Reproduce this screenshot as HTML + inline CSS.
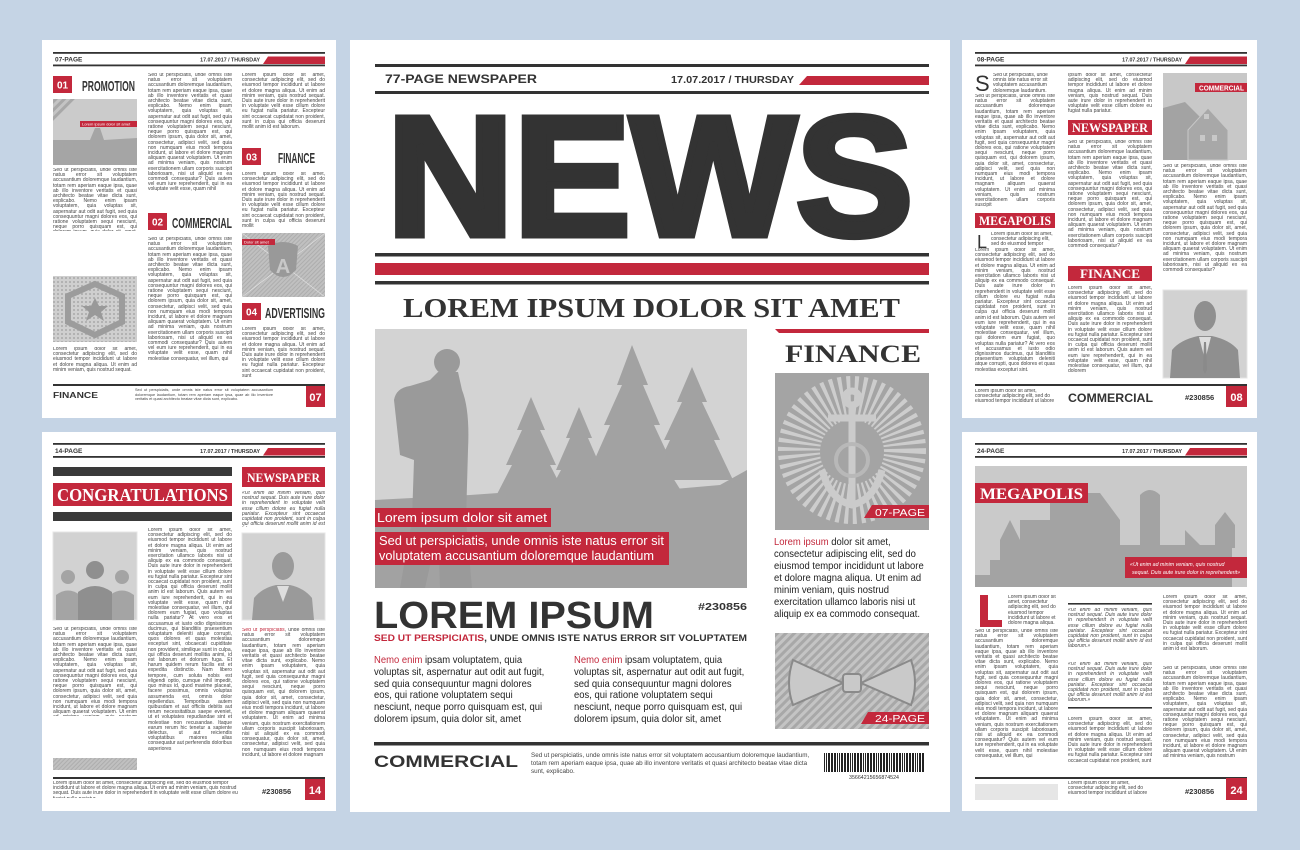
<!DOCTYPE html>
<html><head><meta charset="utf-8">
<style>
html,body{margin:0;padding:0}
body{width:1300px;height:850px;position:relative;overflow:hidden;background:#c5d4e5;font-family:"Liberation Sans",sans-serif}
svg{position:absolute;left:0;top:0}
.s{position:absolute;font:5px/5.2px "Liberation Sans",sans-serif;color:#444;text-align:justify;overflow:hidden}
.i{font-style:italic}
.m{position:absolute;font:10.5px/11.8px "Liberation Sans",sans-serif;color:#222;overflow:hidden;transform:scaleX(0.9);transform-origin:0 0}
.r{color:#c3283c}
</style></head><body>
<svg width="1300" height="850" viewBox="0 0 1300 850" font-family="Liberation Sans, sans-serif">
<defs>
<pattern id="dots" width="4" height="4" patternUnits="userSpaceOnUse"><rect width="4" height="4" fill="#cfcfcf"/><circle cx="2" cy="2" r="1" fill="#a8a8a8"/></pattern>
<pattern id="diag" width="6" height="6" patternUnits="userSpaceOnUse" patternTransform="rotate(45)"><rect width="6" height="6" fill="#c4c4c4"/><rect width="3" height="6" fill="#a8a8a8"/></pattern>
<pattern id="thin" width="3" height="3" patternUnits="userSpaceOnUse" patternTransform="rotate(45)"><rect width="3" height="3" fill="#c0c0c0"/><rect width="1" height="3" fill="#adadad"/></pattern>
<pattern id="bar" width="13" height="20" patternUnits="userSpaceOnUse"><rect x="0" width="1" height="20" fill="#222"/><rect x="2" width="2" height="20" fill="#222"/><rect x="5" width="1" height="20" fill="#222"/><rect x="7" width="1" height="20" fill="#222"/><rect x="9" width="2" height="20" fill="#222"/><rect x="12" width="1" height="20" fill="#222"/></pattern>
</defs>
<rect width="1300" height="850" fill="#c5d4e5"/>
<rect x="42" y="40" width="294" height="378" fill="#fff"/>
<rect x="42" y="432" width="294" height="379" fill="#fff"/>
<rect x="350" y="40" width="600" height="772" fill="#fff"/>
<rect x="962" y="40" width="295" height="378" fill="#fff"/>
<rect x="962" y="432" width="295" height="379" fill="#fff"/>

<!-- ===== TOP LEFT ===== -->
<rect x="53" y="52" width="272" height="1.8" fill="#333"/><rect x="53" y="64.5" width="272" height="1.8" fill="#333"/>
<text x="55" y="61.5" font-size="6.5" font-weight="bold" fill="#333">07-PAGE</text>
<text x="260" y="61.5" font-size="5.3" font-weight="bold" fill="#333" text-anchor="end">17.07.2017 / THURSDAY</text>
<polygon points="263,64 268,56.5 325,56.5 325,64" fill="#c3283c"/>
<rect x="53" y="76" width="19" height="17" fill="#c3283c"/><text x="62.5" y="88.5" font-size="10" font-weight="bold" fill="#fff" text-anchor="middle">01</text>
<text x="82" y="91" font-size="15" font-weight="bold" fill="#333" textLength="53" lengthAdjust="spacingAndGlyphs">PROMOTION</text>
<rect x="53" y="99" width="84" height="66" fill="#cbcbcb"/>
<polygon points="53,99 75,99 53,121" fill="url(#diag)"/>
<polygon points="53,165 53,140 90,140 95,128 100,128 104,140 137,138 137,165" fill="#a5a5a5"/>
<rect x="80" y="121" width="57" height="6" fill="#c3283c"/><text x="82" y="125.5" font-size="4" fill="#fff">Lorem ipsum dolor sit amet</text>
<rect x="53" y="276" width="84" height="66" fill="url(#dots)"/>
<polygon points="95,284 122,296 122,322 95,335 68,322 68,296" fill="none" stroke="#9c9c9c" stroke-width="6"/>
<polygon points="95,298 99,306 108,306 101,312 104,321 95,315 86,321 89,312 82,306 91,306" fill="#999"/>
<rect x="148" y="213" width="19" height="17" fill="#c3283c"/><text x="157.5" y="225.5" font-size="10" font-weight="bold" fill="#fff" text-anchor="middle">02</text>
<text x="172" y="228" font-size="15" font-weight="bold" fill="#333" textLength="60" lengthAdjust="spacingAndGlyphs">COMMERCIAL</text>
<rect x="242" y="148" width="19" height="17" fill="#c3283c"/><text x="251.5" y="160.5" font-size="10" font-weight="bold" fill="#fff" text-anchor="middle">03</text>
<text x="278" y="163" font-size="15" font-weight="bold" fill="#333" textLength="37" lengthAdjust="spacingAndGlyphs">FINANCE</text>
<rect x="242" y="233" width="83" height="64" fill="url(#thin)"/>
<line x1="242" y1="233" x2="325" y2="297" stroke="#e0e0e0" stroke-width="0.7"/><line x1="325" y1="233" x2="242" y2="297" stroke="#e0e0e0" stroke-width="0.7"/>
<path d="M268,246 Q283,238 298,246 L296,270 Q283,284 270,270 Z" fill="#999"/>
<text x="283" y="273" font-size="20" font-weight="bold" fill="#c8c8c8" text-anchor="middle">A</text>
<rect x="242" y="239" width="33" height="6" fill="#c3283c"/><text x="244" y="243.5" font-size="4" fill="#fff">Dolor sit amet</text>
<rect x="242" y="303" width="19" height="17" fill="#c3283c"/><text x="251.5" y="315.5" font-size="10" font-weight="bold" fill="#fff" text-anchor="middle">04</text>
<text x="265" y="318" font-size="15" font-weight="bold" fill="#333" textLength="60" lengthAdjust="spacingAndGlyphs">ADVERTISING</text>
<rect x="53" y="384" width="272" height="2" fill="#333"/>
<text x="53" y="398" font-size="8" font-weight="bold" fill="#333" textLength="45" lengthAdjust="spacingAndGlyphs">FINANCE</text>
<rect x="306" y="386" width="19" height="21" fill="#c3283c"/><text x="315.5" y="401" font-size="11" font-weight="bold" fill="#fff" text-anchor="middle">07</text>

<!-- ===== BOTTOM LEFT ===== -->
<rect x="53" y="443" width="272" height="1.8" fill="#333"/><rect x="53" y="456" width="272" height="1.8" fill="#333"/>
<text x="55" y="453" font-size="6.5" font-weight="bold" fill="#333">14-PAGE</text>
<text x="260" y="453" font-size="5.3" font-weight="bold" fill="#333" text-anchor="end">17.07.2017 / THURSDAY</text>
<polygon points="263,455.5 268,448 325,448 325,455.5" fill="#c3283c"/>
<rect x="53" y="467" width="179" height="9" fill="#3a3a3a"/>
<rect x="53" y="483" width="179" height="23" fill="#c3283c"/>
<text x="57" y="501" font-family="Liberation Serif, serif" font-size="18" font-weight="bold" fill="#fff" textLength="171" lengthAdjust="spacingAndGlyphs">CONGRATULATIONS</text>
<rect x="53" y="512" width="179" height="9" fill="#3a3a3a"/>
<rect x="242" y="467" width="83" height="20" fill="#c3283c"/>
<text x="247" y="482" font-family="Liberation Serif, serif" font-size="13" font-weight="bold" fill="#fff" textLength="73" lengthAdjust="spacingAndGlyphs">NEWSPAPER</text>
<rect x="53" y="532" width="84" height="88" fill="#d2d2d2" stroke="#e4e4e4"/>
<circle cx="68" cy="577" r="7" fill="#a4a4a4"/><path d="M56,620 L56,595 Q68,586 80,595 L80,620Z" fill="#a4a4a4"/>
<circle cx="122" cy="577" r="7" fill="#a4a4a4"/><path d="M110,620 L110,595 Q122,586 134,595 L134,620Z" fill="#a4a4a4"/>
<circle cx="95" cy="570" r="9" fill="#8f8f8f"/><path d="M78,620 L78,592 Q95,580 112,592 L112,620Z" fill="#8f8f8f"/>
<rect x="53" y="758" width="84" height="12" fill="url(#thin)"/>
<rect x="242" y="533" width="83" height="87" fill="#d2d2d2" stroke="#e4e4e4"/>
<ellipse cx="283" cy="566" rx="11" ry="14" fill="#9a9a9a"/><path d="M252,620 L254,598 Q262,588 276,585 L290,585 Q304,588 312,598 L314,620Z" fill="#9a9a9a"/>
<path d="M277,586 L283,602 L289,586Z" fill="#dedede"/>
<rect x="53" y="777" width="272" height="2" fill="#333"/>
<text x="262" y="794" font-size="7.5" font-weight="bold" fill="#333">#230856</text>
<rect x="305" y="779" width="20" height="21" fill="#c3283c"/><text x="315" y="794" font-size="11" font-weight="bold" fill="#fff" text-anchor="middle">14</text>

<!-- ===== TOP RIGHT ===== -->
<rect x="975" y="52" width="272" height="1.8" fill="#333"/><rect x="975" y="64.5" width="272" height="1.8" fill="#333"/>
<text x="977" y="61.5" font-size="6.5" font-weight="bold" fill="#333">08-PAGE</text>
<text x="1182" y="61.5" font-size="5.3" font-weight="bold" fill="#333" text-anchor="end">17.07.2017 / THURSDAY</text>
<polygon points="1185,64 1190,56.5 1247,56.5 1247,64" fill="#c3283c"/>
<text x="975" y="91" font-size="22" fill="#333">S</text>
<rect x="975" y="213" width="80" height="15" fill="#c3283c"/>
<text x="979" y="225" font-family="Liberation Serif, serif" font-size="12.5" font-weight="bold" fill="#fff" textLength="72" lengthAdjust="spacingAndGlyphs">MEGAPOLIS</text>
<text x="977" y="248" font-size="18" fill="#333">L</text>
<rect x="1068" y="120" width="84" height="15" fill="#c3283c"/>
<text x="1072" y="132" font-family="Liberation Serif, serif" font-size="12.5" font-weight="bold" fill="#fff" textLength="76" lengthAdjust="spacingAndGlyphs">NEWSPAPER</text>
<rect x="1068" y="266" width="84" height="15" fill="#c3283c"/>
<text x="1080" y="278" font-family="Liberation Serif, serif" font-size="12.5" font-weight="bold" fill="#fff" textLength="60" lengthAdjust="spacingAndGlyphs">FINANCE</text>
<rect x="1163" y="73" width="84" height="87" fill="#c8c8c8"/>
<polygon points="1163,160 1163,108 1185,102 1205,122 1205,160" fill="#a3a3a3"/>
<polygon points="1188,160 1188,130 1208,108 1228,130 1228,160" fill="#a8a8a8" stroke="#c8c8c8"/>
<rect x="1200" y="135" width="5" height="6" fill="#c8c8c8"/><rect x="1212" y="135" width="5" height="6" fill="#c8c8c8"/><rect x="1204" y="114" width="5" height="5" fill="#c8c8c8"/>
<rect x="1195" y="83" width="52" height="9" fill="#c3283c"/><text x="1199" y="90.5" font-size="7" font-weight="bold" fill="#fff" textLength="45" lengthAdjust="spacingAndGlyphs">COMMERCIAL</text>
<rect x="1163" y="290" width="84" height="88" fill="#d2d2d2" stroke="#e4e4e4"/>
<ellipse cx="1205" cy="316" rx="11" ry="15" fill="#8f8f8f"/><path d="M1170,378 L1172,350 Q1180,340 1198,336 L1212,336 Q1230,340 1238,350 L1240,378Z" fill="#8f8f8f"/>
<path d="M1199,337 L1205,360 L1211,337Z" fill="#dedede"/><path d="M1204,342 L1206,342 L1207,370 L1205,374 L1203,370Z" fill="#8a8a8a"/>
<rect x="975" y="384" width="272" height="2" fill="#333"/>
<text x="1068" y="402" font-size="12" font-weight="bold" fill="#333" textLength="85" lengthAdjust="spacingAndGlyphs">COMMERCIAL</text>
<text x="1185" y="400" font-size="7.5" font-weight="bold" fill="#333">#230856</text>
<rect x="1226" y="386" width="21" height="21" fill="#c3283c"/><text x="1236.5" y="401" font-size="11" font-weight="bold" fill="#fff" text-anchor="middle">08</text>

<!-- ===== BOTTOM RIGHT ===== -->
<rect x="975" y="443" width="272" height="1.8" fill="#333"/><rect x="975" y="456" width="272" height="1.8" fill="#333"/>
<text x="977" y="453" font-size="6.5" font-weight="bold" fill="#333">24-PAGE</text>
<text x="1182" y="453" font-size="5.3" font-weight="bold" fill="#333" text-anchor="end">17.07.2017 / THURSDAY</text>
<polygon points="1185,455.5 1190,448 1247,448 1247,455.5" fill="#c3283c"/>
<rect x="975" y="466" width="272" height="121" fill="#cacaca"/>
<path d="M975,587 L975,575 L990,575 L990,560 L1000,560 L1000,540 L1010,520 L1020,540 L1020,520 L1050,520 L1050,493 L1100,493 L1120,520 L1120,545 L1140,545 L1140,495 Q1150,485 1160,495 L1160,545 L1185,545 L1185,530 L1200,545 L1215,545 L1215,525 L1225,512 L1235,525 L1235,548 L1232,548 L1232,587Z" fill="#a3a3a3"/>
<rect x="975" y="483" width="113" height="20" fill="#c3283c"/>
<text x="980" y="499" font-family="Liberation Serif, serif" font-size="16" font-weight="bold" fill="#fff" textLength="103" lengthAdjust="spacingAndGlyphs">MEGAPOLIS</text>
<rect x="1125" y="557" width="122" height="21" fill="#c3283c"/>
<text x="1130" y="566" font-size="5.3" font-style="italic" fill="#fff">«Ut enim ad minim veniam, quis nostrud</text>
<text x="1132" y="574" font-size="5.3" font-style="italic" fill="#fff">sequat. Duis aute irure dolor in reprehenderit»</text>
<path d="M980,595 L988,595 L988,620 L1002,620 L1002,627 L980,627Z" fill="#c3283c"/>
<rect x="1068" y="603" width="84" height="1.6" fill="#333"/>
<rect x="1068" y="707" width="84" height="1.6" fill="#333"/>
<rect x="975" y="777" width="272" height="2" fill="#333"/>
<rect x="975" y="784" width="83" height="16" fill="#e6e6e6"/>
<text x="1185" y="794" font-size="7.5" font-weight="bold" fill="#333">#230856</text>
<rect x="1226" y="778" width="21" height="22" fill="#c3283c"/><text x="1236.5" y="794" font-size="11" font-weight="bold" fill="#fff" text-anchor="middle">24</text>

<!-- ===== CENTER ===== -->
<rect x="375" y="64" width="554" height="3" fill="#333"/>
<text x="385" y="83" font-size="12" font-weight="bold" fill="#333" textLength="152" lengthAdjust="spacingAndGlyphs">77-PAGE NEWSPAPER</text>
<text x="794" y="83" font-size="10" font-weight="bold" fill="#333" text-anchor="end" textLength="123" lengthAdjust="spacingAndGlyphs">17.07.2017 / THURSDAY</text>
<polygon points="799,85 807,76 929,76 929,85" fill="#c3283c"/>
<rect x="375" y="91" width="554" height="3" fill="#333"/>
<text x="387" y="235" font-family="Liberation Sans, sans-serif" font-size="170" font-weight="bold" fill="#333" stroke="#333" stroke-width="7" stroke-linejoin="miter" textLength="526" lengthAdjust="spacingAndGlyphs">NEWS</text>
<rect x="375" y="253" width="554" height="3.5" fill="#333"/>
<rect x="375" y="263" width="554" height="12" fill="#c3283c"/>
<rect x="375" y="281" width="554" height="3.5" fill="#333"/>
<text x="403" y="317" font-family="Liberation Serif, serif" font-size="27" font-weight="bold" fill="#333" textLength="497" lengthAdjust="spacingAndGlyphs">LOREM IPSUM DOLOR SIT AMET</text>
<!-- photo -->
<rect x="375" y="329" width="372" height="259" fill="#d3d3d3"/>
<g fill="#a2a2a2">
<polygon points="531,397 545,430 540,430 556,465 550,465 568,500 494,500 512,465 506,465 522,430 517,430"/>
<polygon points="579,407 592,438 588,438 602,470 597,470 614,502 544,502 561,470 556,470 570,438 566,438"/>
<polygon points="632,345 648,385 643,385 660,425 654,425 675,470 668,470 690,505 574,505 596,470 590,470 610,425 604,425 622,385 617,385"/>
<polygon points="692,367 707,402 702,402 720,440 714,440 733,480 651,480 670,440 664,440 682,402 677,402"/>
<polygon points="375,588 375,500 470,495 540,490 640,492 720,485 747,470 747,588"/>
</g>
<g fill="#9a9a9a">
<circle cx="447" cy="362" r="13"/>
<path d="M438,372 L458,372 L462,390 Q470,410 468,450 L466,520 L472,588 L440,588 L438,530 L425,588 L400,588 L412,520 L414,460 L400,455 L394,400 Q396,388 410,386 L430,380Z"/>
</g>
<rect x="375" y="508" width="176" height="19" fill="#c3283c"/>
<text x="377" y="522" font-size="13" fill="#fff" textLength="170" lengthAdjust="spacingAndGlyphs">Lorem ipsum dolor sit amet</text>
<rect x="375" y="532" width="294" height="33" fill="#c3283c"/>
<text x="379" y="545" font-size="12.5" fill="#fff" textLength="285" lengthAdjust="spacingAndGlyphs">Sed ut perspiciatis, unde omnis iste natus error sit</text>
<text x="379" y="560" font-size="12.5" fill="#fff" textLength="275" lengthAdjust="spacingAndGlyphs">voluptatem accusantium doloremque laudantium</text>
<!-- right column -->
<polygon points="775,329 929,329 929,333 779,333" fill="#c3283c"/>
<text x="785" y="362" font-family="Liberation Serif, serif" font-size="25" font-weight="bold" fill="#333" textLength="136" lengthAdjust="spacingAndGlyphs">FINANCE</text>
<rect x="775" y="373" width="154" height="157" fill="#a4a4a4"/>
<circle cx="852" cy="450" r="52" fill="none" stroke="#cdcdcd" stroke-width="44" stroke-dasharray="3 3.5"/>
<circle cx="852" cy="452" r="32" fill="#a4a4a4"/>
<g fill="none" stroke="#cbcbcb" stroke-width="7">
<circle cx="852" cy="398" r="7"/>
<line x1="852" y1="405" x2="852" y2="505"/>
<line x1="828" y1="418" x2="876" y2="418"/>
<path d="M822,470 Q830,500 852,505 Q874,500 882,470"/>
</g>
<circle cx="852" cy="460" r="16" fill="none" stroke="#b8b8b8" stroke-width="4"/>
<polygon points="864,518 872,505 929,505 929,518" fill="#c3283c"/>
<text x="875" y="516" font-size="10.5" fill="#fff" textLength="50" lengthAdjust="spacingAndGlyphs">07-PAGE</text>
<rect x="775" y="633" width="154" height="96" fill="url(#diag)"/>
<path d="M793,660 L843,683 L793,705 Q785,683 793,660Z M911,660 L861,683 L911,705 Q919,683 911,660Z" fill="#c9c9c9" stroke="#8a8a8a" stroke-width="2"/>
<rect x="843" y="674" width="18" height="18" rx="3" fill="#c9c9c9" stroke="#8a8a8a" stroke-width="2"/>
<polygon points="861,724 868,712 929,712 929,724" fill="#c3283c"/>
<text x="875" y="722" font-size="10.5" fill="#fff" textLength="50" lengthAdjust="spacingAndGlyphs">24-PAGE</text>
<!-- big title -->
<text x="374" y="628" font-size="38" font-weight="bold" fill="#333" textLength="280" lengthAdjust="spacingAndGlyphs">LOREM IPSUM</text>
<text x="698" y="610" font-size="10" font-weight="bold" fill="#333" textLength="49" lengthAdjust="spacingAndGlyphs">#230856</text>
<text x="374" y="641" font-size="9.5" font-weight="bold" fill="#333" textLength="373" lengthAdjust="spacingAndGlyphs"><tspan fill="#c3283c">SED UT PERSPICIATIS</tspan>, UNDE OMNIS ISTE NATUS ERROR SIT VOLUPTATEM</text>
<rect x="374" y="742" width="555" height="3.5" fill="#333"/>
<text x="374" y="767" font-size="17" font-weight="bold" fill="#333" textLength="144" lengthAdjust="spacingAndGlyphs">COMMERCIAL</text>
<rect x="823" y="753" width="102" height="19" fill="url(#bar)"/>
<text x="874" y="779" font-size="5" fill="#333" text-anchor="middle" textLength="50" lengthAdjust="spacingAndGlyphs">35664215656874524</text>
</svg>

<!-- center paragraphs -->
<div class="m" style="left:774px;top:536px;width:172px;height:86px;line-height:12px">
<span class="r">Lorem ipsum</span> dolor sit amet, consectetur adipiscing elit, sed do eiusmod tempor incididunt ut labore et dolore magna aliqua. Ut enim ad minim veniam, quis nostrud exercitation ullamco laboris nisi ut aliquip ex ea commodo consequat.</div>
<div class="m" style="left:374px;top:655px;width:195px;height:72px"><span class="r">Nemo enim</span> ipsam voluptatem, quia voluptas sit, aspernatur aut odit aut fugit, sed quia consequuntur magni dolores eos, qui ratione voluptatem sequi nesciunt, neque porro quisquam est, qui dolorem ipsum, quia dolor sit, amet</div>
<div class="m" style="left:574px;top:655px;width:195px;height:72px"><span class="r">Nemo enim</span> ipsam voluptatem, quia voluptas sit, aspernatur aut odit aut fugit, sed quia consequuntur magni dolores eos, qui ratione voluptatem sequi nesciunt, neque porro quisquam est, qui dolorem ipsum, quia dolor sit, amet</div>
<div class="s" style="left:531px;top:752px;width:280px;height:26px;font-size:6.3px;line-height:8px;text-align:left">Sed ut perspiciatis, unde omnis iste natus error sit voluptatem accusantium doloremque laudantium, totam rem aperiam eaque ipsa, quae ab illo inventore veritatis et quasi architecto beatae vitae dicta sunt, explicabo.</div>

<!-- TOP LEFT paragraphs -->
<div class="s" style="left:53px;top:168px;width:84px;height:63px">Sed ut perspiciatis, unde omnis iste natus error sit voluptatem accusantium doloremque laudantium, totam rem aperiam eaque ipsa, quae ab illo inventore veritatis et quasi architecto beatae vitae dicta sunt, explicabo. Nemo enim ipsam voluptatem, quia voluptas sit, aspernatur aut odit aut fugit, sed quia consequuntur magni dolores eos, qui ratione voluptatem sequi nesciunt, neque porro quisquam est, qui dolorem ipsum, quia dolor sit, amet, consectetur, adipisci velit, sed quia non numquam eius modi tempora incidunt, ut labore et dolore magnam aliquam quaerat voluptatem.</div>
<div class="s" style="left:53px;top:347px;width:84px;height:31px">Lorem ipsum dolor sit amet, consectetur adipiscing elit, sed do eiusmod tempor incididunt ut labore et dolore magna aliqua. Ut enim ad minim veniam, quis nostrud sequat.</div>
<div class="s" style="left:148px;top:73px;width:84px;height:131px">Sed ut perspiciatis, unde omnis iste natus error sit voluptatem accusantium doloremque laudantium, totam rem aperiam eaque ipsa, quae ab illo inventore veritatis et quasi architecto beatae vitae dicta sunt, explicabo. Nemo enim ipsam voluptatem, quia voluptas sit, aspernatur aut odit aut fugit, sed quia consequuntur magni dolores eos, qui ratione voluptatem sequi nesciunt, neque porro quisquam est, qui dolorem ipsum, quia dolor sit, amet, consectetur, adipisci velit, sed quia non numquam eius modi tempora incidunt, ut labore et dolore magnam aliquam quaerat voluptatem. Ut enim ad minima veniam, quis nostrum exercitationem ullam corporis suscipit laboriosam, nisi ut aliquid ex ea commodi consequatur? Quis autem vel eum iure reprehenderit, qui in ea voluptate velit esse, quam nihil</div>
<div class="s" style="left:148px;top:237px;width:84px;height:141px">Sed ut perspiciatis, unde omnis iste natus error sit voluptatem accusantium doloremque laudantium, totam rem aperiam eaque ipsa, quae ab illo inventore veritatis et quasi architecto beatae vitae dicta sunt, explicabo. Nemo enim ipsam voluptatem, quia voluptas sit, aspernatur aut odit aut fugit, sed quia consequuntur magni dolores eos, qui ratione voluptatem sequi nesciunt, neque porro quisquam est, qui dolorem ipsum, quia dolor sit, amet, consectetur, adipisci velit, sed quia non numquam eius modi tempora incidunt, ut labore et dolore magnam aliquam quaerat voluptatem. Ut enim ad minima veniam, quis nostrum exercitationem ullam corporis suscipit laboriosam, nisi ut aliquid ex ea commodi consequatur? Quis autem vel eum iure reprehenderit, qui in ea voluptate velit esse, quam nihil molestiae consequatur, vel illum, qui</div>
<div class="s" style="left:242px;top:73px;width:83px;height:70px">Lorem ipsum dolor sit amet, consectetur adipiscing elit, sed do eiusmod tempor incididunt ut labore et dolore magna aliqua. Ut enim ad minim veniam, quis nostrud sequat. Duis aute irure dolor in reprehenderit in voluptate velit esse cillum dolore eu fugiat nulla pariatur. Excepteur sint occaecat cupidatat non proident, sunt in culpa qui officia deserunt mollit anim id est laborum.</div>
<div class="s" style="left:242px;top:172px;width:83px;height:56px">Lorem ipsum dolor sit amet, consectetur adipiscing elit, sed do eiusmod tempor incididunt ut labore et dolore magna aliqua. Ut enim ad minim veniam, quis nostrud sequat. Duis aute irure dolor in reprehenderit in voluptate velit esse cillum dolore eu fugiat nulla pariatur. Excepteur sint occaecat cupidatat non proident, sunt in culpa qui officia deserunt mollit</div>
<div class="s" style="left:242px;top:327px;width:83px;height:51px">Lorem ipsum dolor sit amet, consectetur adipiscing elit, sed do eiusmod tempor incididunt ut labore et dolore magna aliqua. Ut enim ad minim veniam, quis nostrud sequat. Duis aute irure dolor in reprehenderit in voluptate velit esse cillum dolore eu fugiat nulla pariatur. Excepteur sint occaecat cupidatat non proident, sunt</div>
<div class="s" style="left:135px;top:388px;width:138px;height:16px;font-size:3.8px;line-height:4.6px">Sed ut perspiciatis, unde omnis iste natus error sit voluptatem accusantium doloremque laudantium, totam rem aperiam eaque ipsa, quae ab illo inventore veritatis et quasi architecto beatae vitae dicta sunt, explicabo.</div>

<!-- BOTTOM LEFT paragraphs -->
<div class="s i" style="left:242px;top:491px;width:83px;height:36px">«Ut enim ad minim veniam, quis nostrud sequat. Duis aute irure dolor in reprehenderit in voluptate velit esse cillum dolore eu fugiat nulla pariatur. Excepteur sint occaecat cupidatat non proident, sunt in culpa qui officia deserunt mollit anim id est laborum.»</div>
<div class="s" style="left:53px;top:627px;width:84px;height:89px">Sed ut perspiciatis, unde omnis iste natus error sit voluptatem accusantium doloremque laudantium, totam rem aperiam eaque ipsa, quae ab illo inventore veritatis et quasi architecto beatae vitae dicta sunt, explicabo. Nemo enim ipsam voluptatem, quia voluptas sit, aspernatur aut odit aut fugit, sed quia consequuntur magni dolores eos, qui ratione voluptatem sequi nesciunt, neque porro quisquam est, qui dolorem ipsum, quia dolor sit, amet, consectetur, adipisci velit, sed quia non numquam eius modi tempora incidunt, ut labore et dolore magnam aliquam quaerat voluptatem. Ut enim ad minima veniam, quis nostrum exercitationem ullam corporis suscipit laboriosam, nisi ut aliquid ex ea commodi consequatur?</div>
<div class="s" style="left:148px;top:528px;width:84px;height:245px">Lorem ipsum dolor sit amet, consectetur adipiscing elit, sed do eiusmod tempor incididunt ut labore et dolore magna aliqua. Ut enim ad minim veniam, quis nostrud exercitation ullamco laboris nisi ut aliquip ex ea commodo consequat. Duis aute irure dolor in reprehenderit in voluptate velit esse cillum dolore eu fugiat nulla pariatur. Excepteur sint occaecat cupidatat non proident, sunt in culpa qui officia deserunt mollit anim id est laborum. Quis autem vel eum iure reprehenderit, qui in ea voluptate velit esse, quam nihil molestiae consequatur, vel illum, qui dolorem eum fugiat, quo voluptas nulla pariatur? At vero eos et accusamus et iusto odio dignissimos ducimus, qui blanditiis praesentium voluptatum deleniti atque corrupti, quos dolores et quas molestias excepturi sint, obcaecati cupiditate non provident, similique sunt in culpa, qui officia deserunt mollitia animi, id est laborum et dolorum fuga. Et harum quidem rerum facilis est et expedita distinctio. Nam libero tempore, cum soluta nobis est eligendi optio, cumque nihil impedit, quo minus id, quod maxime placeat, facere possimus, omnis voluptas assumenda est, omnis dolor repellendus. Temporibus autem quibusdam et aut officiis debitis aut rerum necessitatibus saepe eveniet, ut et voluptates repudiandae sint et molestiae non recusandae. Itaque earum rerum hic tenetur a sapiente delectus, ut aut reiciendis voluptatibus maiores alias consequatur aut perferendis doloribus asperiores</div>
<div class="s" style="left:242px;top:628px;width:83px;height:145px"><span class="r">Sed ut perspiciatis</span>, unde omnis iste natus error sit voluptatem accusantium doloremque laudantium, totam rem aperiam eaque ipsa, quae ab illo inventore veritatis et quasi architecto beatae vitae dicta sunt, explicabo. Nemo enim ipsam voluptatem, quia voluptas sit, aspernatur aut odit aut fugit, sed quia consequuntur magni dolores eos, qui ratione voluptatem sequi nesciunt, neque porro quisquam est, qui dolorem ipsum, quia dolor sit, amet, consectetur, adipisci velit, sed quia non numquam eius modi tempora incidunt, ut labore et dolore magnam aliquam quaerat voluptatem. Ut enim ad minima veniam, quis nostrum exercitationem ullam corporis suscipit laboriosam, nisi ut aliquid ex ea commodi consequatur, quis dolor sit, amet, consectetur, adipisci velit, sed quia non numquam eius modi tempora incidunt, ut labore et dolore magnam</div>
<div class="s" style="left:53px;top:781px;width:195px;height:17px;text-align:left">Lorem ipsum dolor sit amet, consectetur adipiscing elit, sed do eiusmod tempor incididunt ut labore et dolore magna aliqua. Ut enim ad minim veniam, quis nostrud sequat. Duis aute irure dolor in reprehenderit in voluptate velit esse cillum dolore eu fugiat nulla pariatur.</div>

<!-- TOP RIGHT paragraphs -->
<div class="s" style="left:993px;top:73px;width:62px;height:21px;text-align:left">Sed ut perspiciatis, unde omnis iste natus error sit voluptatem accusantium doloremque laudantium.</div>
<div class="s" style="left:975px;top:94px;width:80px;height:119px">Sed ut perspiciatis, unde omnis iste natus error sit voluptatem accusantium doloremque laudantium, totam rem aperiam eaque ipsa, quae ab illo inventore veritatis et quasi architecto beatae vitae dicta sunt, explicabo. Nemo enim ipsam voluptatem, quia voluptas sit, aspernatur aut odit aut fugit, sed quia consequuntur magni dolores eos, qui ratione voluptatem sequi nesciunt, neque porro quisquam est, qui dolorem ipsum, quia dolor sit, amet, consectetur, adipisci velit, sed quia non numquam eius modi tempora incidunt, ut labore et dolore magnam aliquam quaerat voluptatem. Ut enim ad minima veniam, quis nostrum exercitationem ullam corporis suscipit</div>
<div class="s" style="left:991px;top:232px;width:64px;height:16px;text-align:left">Lorem ipsum dolor sit amet, consectetur adipiscing elit, sed do eiusmod tempor</div>
<div class="s" style="left:975px;top:248px;width:80px;height:130px">Lorem ipsum dolor sit amet, consectetur adipiscing elit, sed do eiusmod tempor incididunt ut labore et dolore magna aliqua. Ut enim ad minim veniam, quis nostrud exercitation ullamco laboris nisi ut aliquip ex ea commodo consequat. Duis aute irure dolor in reprehenderit in voluptate velit esse cillum dolore eu fugiat nulla pariatur. Excepteur sint occaecat cupidatat non proident, sunt in culpa qui officia deserunt mollit anim id est laborum. Quis autem vel eum iure reprehenderit, qui in ea voluptate velit esse, quam nihil molestiae consequatur, vel illum, qui dolorem eum fugiat, quo voluptas nulla pariatur? At vero eos et accusamus et iusto odio dignissimos ducimus, qui blanditiis praesentium voluptatum deleniti atque corrupti, quos dolores et quas molestias excepturi sint.</div>
<div class="s" style="left:1068px;top:73px;width:84px;height:42px">Ipsum dolor sit amet, consectetur adipiscing elit, sed do eiusmod tempor incididunt ut labore et dolore magna aliqua. Ut enim ad minim veniam, quis nostrud sequat. Duis aute irure dolor in reprehenderit in voluptate velit esse cillum dolore eu fugiat nulla pariatur.</div>
<div class="s" style="left:1068px;top:140px;width:84px;height:122px">Sed ut perspiciatis, unde omnis iste natus error sit voluptatem accusantium doloremque laudantium, totam rem aperiam eaque ipsa, quae ab illo inventore veritatis et quasi architecto beatae vitae dicta sunt, explicabo. Nemo enim ipsam voluptatem, quia voluptas sit, aspernatur aut odit aut fugit, sed quia consequuntur magni dolores eos, qui ratione voluptatem sequi nesciunt, neque porro quisquam est, qui dolorem ipsum, quia dolor sit, amet, consectetur, adipisci velit, sed quia non numquam eius modi tempora incidunt, ut labore et dolore magnam aliquam quaerat voluptatem. Ut enim ad minima veniam, quis nostrum exercitationem ullam corporis suscipit laboriosam, nisi ut aliquid ex ea commodi consequatur?</div>
<div class="s" style="left:1068px;top:286px;width:84px;height:92px">Lorem ipsum dolor sit amet, consectetur adipiscing elit, sed do eiusmod tempor incididunt ut labore et dolore magna aliqua. Ut enim ad minim veniam, quis nostrud exercitation ullamco laboris nisi ut aliquip ex ea commodo consequat. Duis aute irure dolor in reprehenderit in voluptate velit esse cillum dolore eu fugiat nulla pariatur. Excepteur sint occaecat cupidatat non proident, sunt in culpa qui officia deserunt mollit anim id est laborum. Quis autem vel eum iure reprehenderit, qui in ea voluptate velit esse, quam nihil molestiae consequatur, vel illum, qui dolorem</div>
<div class="s" style="left:1163px;top:164px;width:84px;height:124px">Sed ut perspiciatis, unde omnis iste natus error sit voluptatem accusantium doloremque laudantium, totam rem aperiam eaque ipsa, quae ab illo inventore veritatis et quasi architecto beatae vitae dicta sunt, explicabo. Nemo enim ipsam voluptatem, quia voluptas sit, aspernatur aut odit aut fugit, sed quia consequuntur magni dolores eos, qui ratione voluptatem sequi nesciunt, neque porro quisquam est, qui dolorem ipsum, quia dolor sit, amet, consectetur, adipisci velit, sed quia non numquam eius modi tempora incidunt, ut labore et dolore magnam aliquam quaerat voluptatem. Ut enim ad minima veniam, quis nostrum exercitationem ullam corporis suscipit laboriosam, nisi ut aliquid ex ea commodi consequatur?</div>
<div class="s" style="left:975px;top:389px;width:82px;height:17px;text-align:left">Lorem ipsum dolor sit amet, consectetur adipiscing elit, sed do eiusmod tempor incididunt ut labore</div>

<!-- BOTTOM RIGHT paragraphs -->
<div class="s" style="left:1008px;top:595px;width:50px;height:32px;text-align:left">Lorem ipsum dolor sit amet, consectetur adipiscing elit, sed do eiusmod tempor incididunt ut labore et dolore magna aliqua.</div>
<div class="s" style="left:975px;top:629px;width:83px;height:144px">Sed ut perspiciatis, unde omnis iste natus error sit voluptatem accusantium doloremque laudantium, totam rem aperiam eaque ipsa, quae ab illo inventore veritatis et quasi architecto beatae vitae dicta sunt, explicabo. Nemo enim ipsam voluptatem, quia voluptas sit, aspernatur aut odit aut fugit, sed quia consequuntur magni dolores eos, qui ratione voluptatem sequi nesciunt, neque porro quisquam est, qui dolorem ipsum, quia dolor sit, amet, consectetur, adipisci velit, sed quia non numquam eius modi tempora incidunt, ut labore et dolore magnam aliquam quaerat voluptatem. Ut enim ad minima veniam, quis nostrum exercitationem ullam corporis suscipit laboriosam, nisi ut aliquid ex ea commodi consequatur? Quis autem vel eum iure reprehenderit, qui in ea voluptate velit esse, quam nihil molestiae consequatur, vel illum, qui</div>
<div class="s i" style="left:1068px;top:608px;width:84px;height:42px">«Ut enim ad minim veniam, quis nostrud sequat. Duis aute irure dolor in reprehenderit in voluptate velit esse cillum dolore eu fugiat nulla pariatur. Excepteur sint occaecat cupidatat non proident, sunt in culpa qui officia deserunt mollit anim id est laborum.»</div>
<div class="s i" style="left:1068px;top:662px;width:84px;height:42px">«Ut enim ad minim veniam, quis nostrud sequat. Duis aute irure dolor in reprehenderit in voluptate velit esse cillum dolore eu fugiat nulla pariatur. Excepteur sint occaecat cupidatat non proident, sunt in culpa qui officia deserunt mollit anim id est laborum.»</div>
<div class="s" style="left:1068px;top:717px;width:84px;height:56px">Lorem ipsum dolor sit amet, consectetur adipiscing elit, sed do eiusmod tempor incididunt ut labore et dolore magna aliqua. Ut enim ad minim veniam, quis nostrud sequat. Duis aute irure dolor in reprehenderit in voluptate velit esse cillum dolore eu fugiat nulla pariatur. Excepteur sint occaecat cupidatat non proident, sunt</div>
<div class="s" style="left:1163px;top:595px;width:84px;height:63px">Lorem ipsum dolor sit amet, consectetur adipiscing elit, sed do eiusmod tempor incididunt ut labore et dolore magna aliqua. Ut enim ad minim veniam, quis nostrud sequat. Duis aute irure dolor in reprehenderit in voluptate velit esse cillum dolore eu fugiat nulla pariatur. Excepteur sint occaecat cupidatat non proident, sunt in culpa qui officia deserunt mollit anim id est laborum.</div>
<div class="s" style="left:1163px;top:666px;width:84px;height:107px">Sed ut perspiciatis, unde omnis iste natus error sit voluptatem accusantium doloremque laudantium, totam rem aperiam eaque ipsa, quae ab illo inventore veritatis et quasi architecto beatae vitae dicta sunt, explicabo. Nemo enim ipsam voluptatem, quia voluptas sit, aspernatur aut odit aut fugit, sed quia consequuntur magni dolores eos, qui ratione voluptatem sequi nesciunt, neque porro quisquam est, qui dolorem ipsum, quia dolor sit, amet, consectetur, adipisci velit, sed quia non numquam eius modi tempora incidunt, ut labore et dolore magnam aliquam quaerat voluptatem. Ut enim ad minima veniam, quis nostrum</div>
<div class="s" style="left:1068px;top:781px;width:84px;height:17px;text-align:left">Lorem ipsum dolor sit amet, consectetur adipiscing elit, sed do eiusmod tempor incididunt ut labore</div>
</body></html>
